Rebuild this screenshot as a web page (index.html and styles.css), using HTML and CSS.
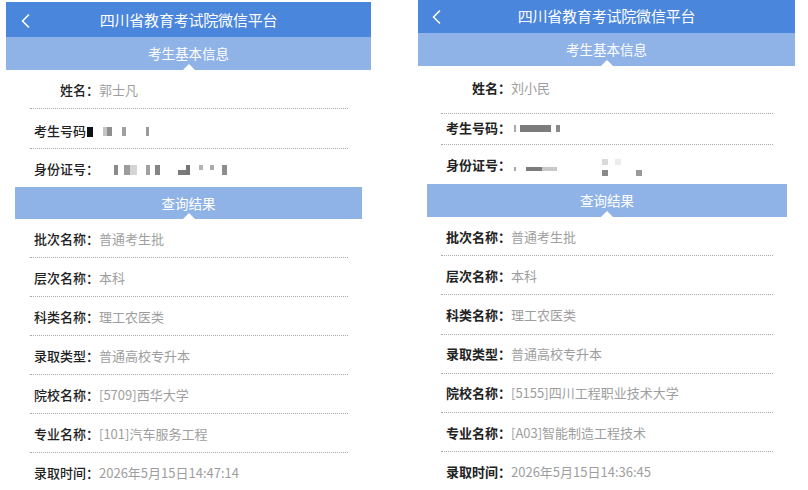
FILE: index.html
```html
<!DOCTYPE html>
<html lang="zh-CN">
<head>
    <meta charset="UTF-8">
    <meta name="viewport" content="width=device-width, initial-scale=1.0">
    <title>录取结果查询</title>
    <link rel="stylesheet" href="styles.css">
</head>
<body>
    <div class="screens">
        <!-- 第一位考生 -->
        <section class="phone phone-a">
            <header class="topbar">
                <span class="back">
                    <svg width="10" height="14" viewBox="0 0 10 14"><path d="M8.5 1 L2.5 7 L8.5 13" fill="none" stroke="#fff" stroke-width="1.6" stroke-linecap="round" stroke-linejoin="round"/></svg>
                </span>
                <h1>四川省教育考试院微信平台</h1>
            </header>
            <div class="section-title">考生基本信息</div>
            <div class="info">
                <div class="row row-name"><span class="label">姓名：</span><span class="value">郭士凡</span></div>
                <div class="row row-no"><span class="label">考生号码<i class="blot"></i></span><span class="mask mask-a1"></span></div>
                <div class="row row-id"><span class="label">身份证号：</span><span class="mask mask-a2"></span></div>
            </div>
            <div class="section-title result">查询结果</div>
            <div class="list">
                <div class="row"><span class="label">批次名称：</span><span class="value">普通考生批</span></div>
                <div class="row"><span class="label">层次名称：</span><span class="value">本科</span></div>
                <div class="row"><span class="label">科类名称：</span><span class="value">理工农医类</span></div>
                <div class="row"><span class="label">录取类型：</span><span class="value">普通高校专升本</span></div>
                <div class="row"><span class="label">院校名称：</span><span class="value">[5709]西华大学</span></div>
                <div class="row"><span class="label">专业名称：</span><span class="value">[101]汽车服务工程</span></div>
                <div class="row last"><span class="label">录取时间：</span><span class="value">2026年5月15日14:47:14</span></div>
            </div>
        </section>

        <!-- 第二位考生 -->
        <section class="phone phone-b">
            <header class="topbar">
                <span class="back">
                    <svg width="10" height="14" viewBox="0 0 10 14"><path d="M8.5 1 L2.5 7 L8.5 13" fill="none" stroke="#fff" stroke-width="1.6" stroke-linecap="round" stroke-linejoin="round"/></svg>
                </span>
                <h1>四川省教育考试院微信平台</h1>
            </header>
            <div class="section-title">考生基本信息</div>
            <div class="info">
                <div class="row row-name"><span class="label">姓名：</span><span class="value">刘小民</span></div>
                <div class="row row-no"><span class="label">考生号码：</span><span class="mask mask-b1"></span></div>
                <div class="row row-id"><span class="label">身份证号：</span><span class="mask mask-b2"></span></div>
            </div>
            <div class="section-title result">查询结果</div>
            <div class="list">
                <div class="row"><span class="label">批次名称：</span><span class="value">普通考生批</span></div>
                <div class="row"><span class="label">层次名称：</span><span class="value">本科</span></div>
                <div class="row"><span class="label">科类名称：</span><span class="value">理工农医类</span></div>
                <div class="row"><span class="label">录取类型：</span><span class="value">普通高校专升本</span></div>
                <div class="row"><span class="label">院校名称：</span><span class="value">[5155]四川工程职业技术大学</span></div>
                <div class="row"><span class="label">专业名称：</span><span class="value">[A03]智能制造工程技术</span></div>
                <div class="row last"><span class="label">录取时间：</span><span class="value">2026年5月15日14:36:45</span></div>
            </div>
        </section>
    </div>
</body>
</html>
```

FILE: styles.css
```css
body {
    margin: 0;
    background: #fff;
    font-family: "Noto Sans CJK SC", "Noto Sans", sans-serif;
}
.screens {
    display: flex;
    align-items: flex-start;
}
.phone-a {
    width: 365px;
    margin: 2px 0 0 6px;
}
.phone-b {
    width: 377px;
    margin-left: 47px;
}

/* 顶部标题栏 */
.topbar {
    display: grid;
    grid-template-columns: 1fr auto 1fr;
    align-items: center;
    background: #4a86db;
    color: #fff;
}
.topbar h1 {
    margin: 0;
    font-size: 15px;
    font-weight: normal;
    line-height: 1;
    letter-spacing: -0.2px;
}
.back {
    display: flex;
    justify-self: start;
}
.phone-a .topbar {
    height: 35px;
}
.phone-a .back {
    margin: 2px 0 0 14px;
}
.phone-b .topbar {
    height: 30px;
    padding-bottom: 3px;
}
.phone-b .back {
    margin: 3px 0 0 13px;
}

/* 分组标题（带白色小三角） */
.section-title {
    position: relative;
    background: #8fb3e6;
    color: #fff;
    text-align: center;
    font-size: 13.5px;
    height: 33px;
    line-height: 33px;
}
.section-title::after {
    content: "";
    position: absolute;
    left: 50%;
    bottom: 0;
    margin-left: -6px;
    border: 6px solid transparent;
    border-top: 0;
    border-bottom-color: #fff;
}
.phone-a .result {
    height: 32px;
    line-height: 32px;
    margin: 0 9px;
}
.phone-b .result {
    margin: 0 8px 0 9px;
}

/* 信息行 */
.row {
    display: flex;
    align-items: center;
    font-size: 13px;
    border-bottom: 1px dotted #a8a8a8;
    box-sizing: content-box;
}
.label {
    flex: none;
    width: 5em;
    text-align: right;
    color: #222;
    white-space: nowrap;
}
.phone-a .label {
    font-weight: 500;
}
.phone-b .label {
    font-weight: bold;
}
.value {
    color: #9e9e9e;
    white-space: nowrap;
}
.phone-a .info,
.phone-a .list {
    margin: 0 23px 0 24px;
}
.phone-a .row {
    padding-left: 4px;
}
.phone-b .info,
.phone-b .list {
    margin: 0 22px 0 23px;
}
.phone-b .row {
    padding-left: 5px;
}
.row-id,
.row.last {
    border-bottom: 0;
}

.phone-a .row-name { height: 38px; }
.phone-a .row-no { height: 36px; padding-top: 3px; }
.phone-a .row-id { height: 38px; }
.phone-a .list .row { height: 38px; }

.phone-b .row-name { height: 42px; padding-bottom: 5px; }
.phone-b .row-no { height: 26px; padding-bottom: 4px; }
.phone-b .row-id { height: 39px; }
.phone-b .list .row { height: 38.2px; }

/* 打码部分 */
.blot {
    display: inline-block;
    width: 6px;
    height: 10px;
    margin: 0 7px 0 1px;
    background: #111;
    vertical-align: -1px;
}
.mask {
    display: inline-block;
    background-repeat: no-repeat;
}
.mask-a1 {
    width: 48px;
    height: 9px;
    margin: 3px 0 0 4px;
    background-image:
        linear-gradient(90deg, #c4c4c4 0 4px, #8f8f8f 4px 9px, transparent 9px 19px, #a0a0a0 19px 23px, transparent 23px 43px, #9a9a9a 43px 46px, transparent 46px);
}
.mask-a2 {
    width: 114px;
    height: 10px;
    margin: 4px 0 0 15px;
    background-image:
        linear-gradient(90deg, #8a8a8a 0 4px, transparent 4px 10px, #9c9c9c 10px 16px, #d4d4d4 16px 23px, transparent 23px 32px, #a0a0a0 32px 36px, transparent 36px 41px, #858585 41px 46px, transparent 46px 72px, #777 72px 76px, transparent 76px 108px, #8d8d8d 108px 113px, transparent 113px),
        linear-gradient(90deg, transparent 0 64px, #7a7a7a 64px 72px, transparent 72px),
        linear-gradient(90deg, transparent 0 85px, #b4b4b4 85px 89px, transparent 89px 96px, #aaa 96px 100px, transparent 100px);
    background-size: 100% 100%, 100% 50%, 100% 50%;
    background-position: 0 0, 0 100%, 0 0;
}
.mask-b1 {
    width: 52px;
    height: 7px;
    margin: 2px 0 0 0;
    background-image:
        linear-gradient(90deg, transparent 0 3px, #aaa 3px 5px, transparent 5px 9px, #7c7c7c 9px 40px, transparent 40px 45px, #8a8a8a 45px 49px, transparent 49px);
    border-radius: 2px;
}
.mask-b2 {
    width: 132px;
    height: 17px;
    margin: 6px 0 0 0;
    background-image:
        linear-gradient(90deg, transparent 0 3px, #aaa 3px 5px, transparent 5px 15px, #7c7c7c 15px 31px, #c8c8c8 31px 46px, transparent 46px),
        linear-gradient(90deg, transparent 0 91px, #dadada 91px 97px, transparent 97px 104px, #ececec 104px 110px, transparent 110px),
        linear-gradient(90deg, transparent 0 91px, #8a8a8a 91px 97px, transparent 97px 125px, #9a9a9a 125px 131px, transparent 131px);
    background-size: 100% 4px, 100% 6px, 100% 6px;
    background-position: 0 8px, 0 0, 0 11px;
}
```
